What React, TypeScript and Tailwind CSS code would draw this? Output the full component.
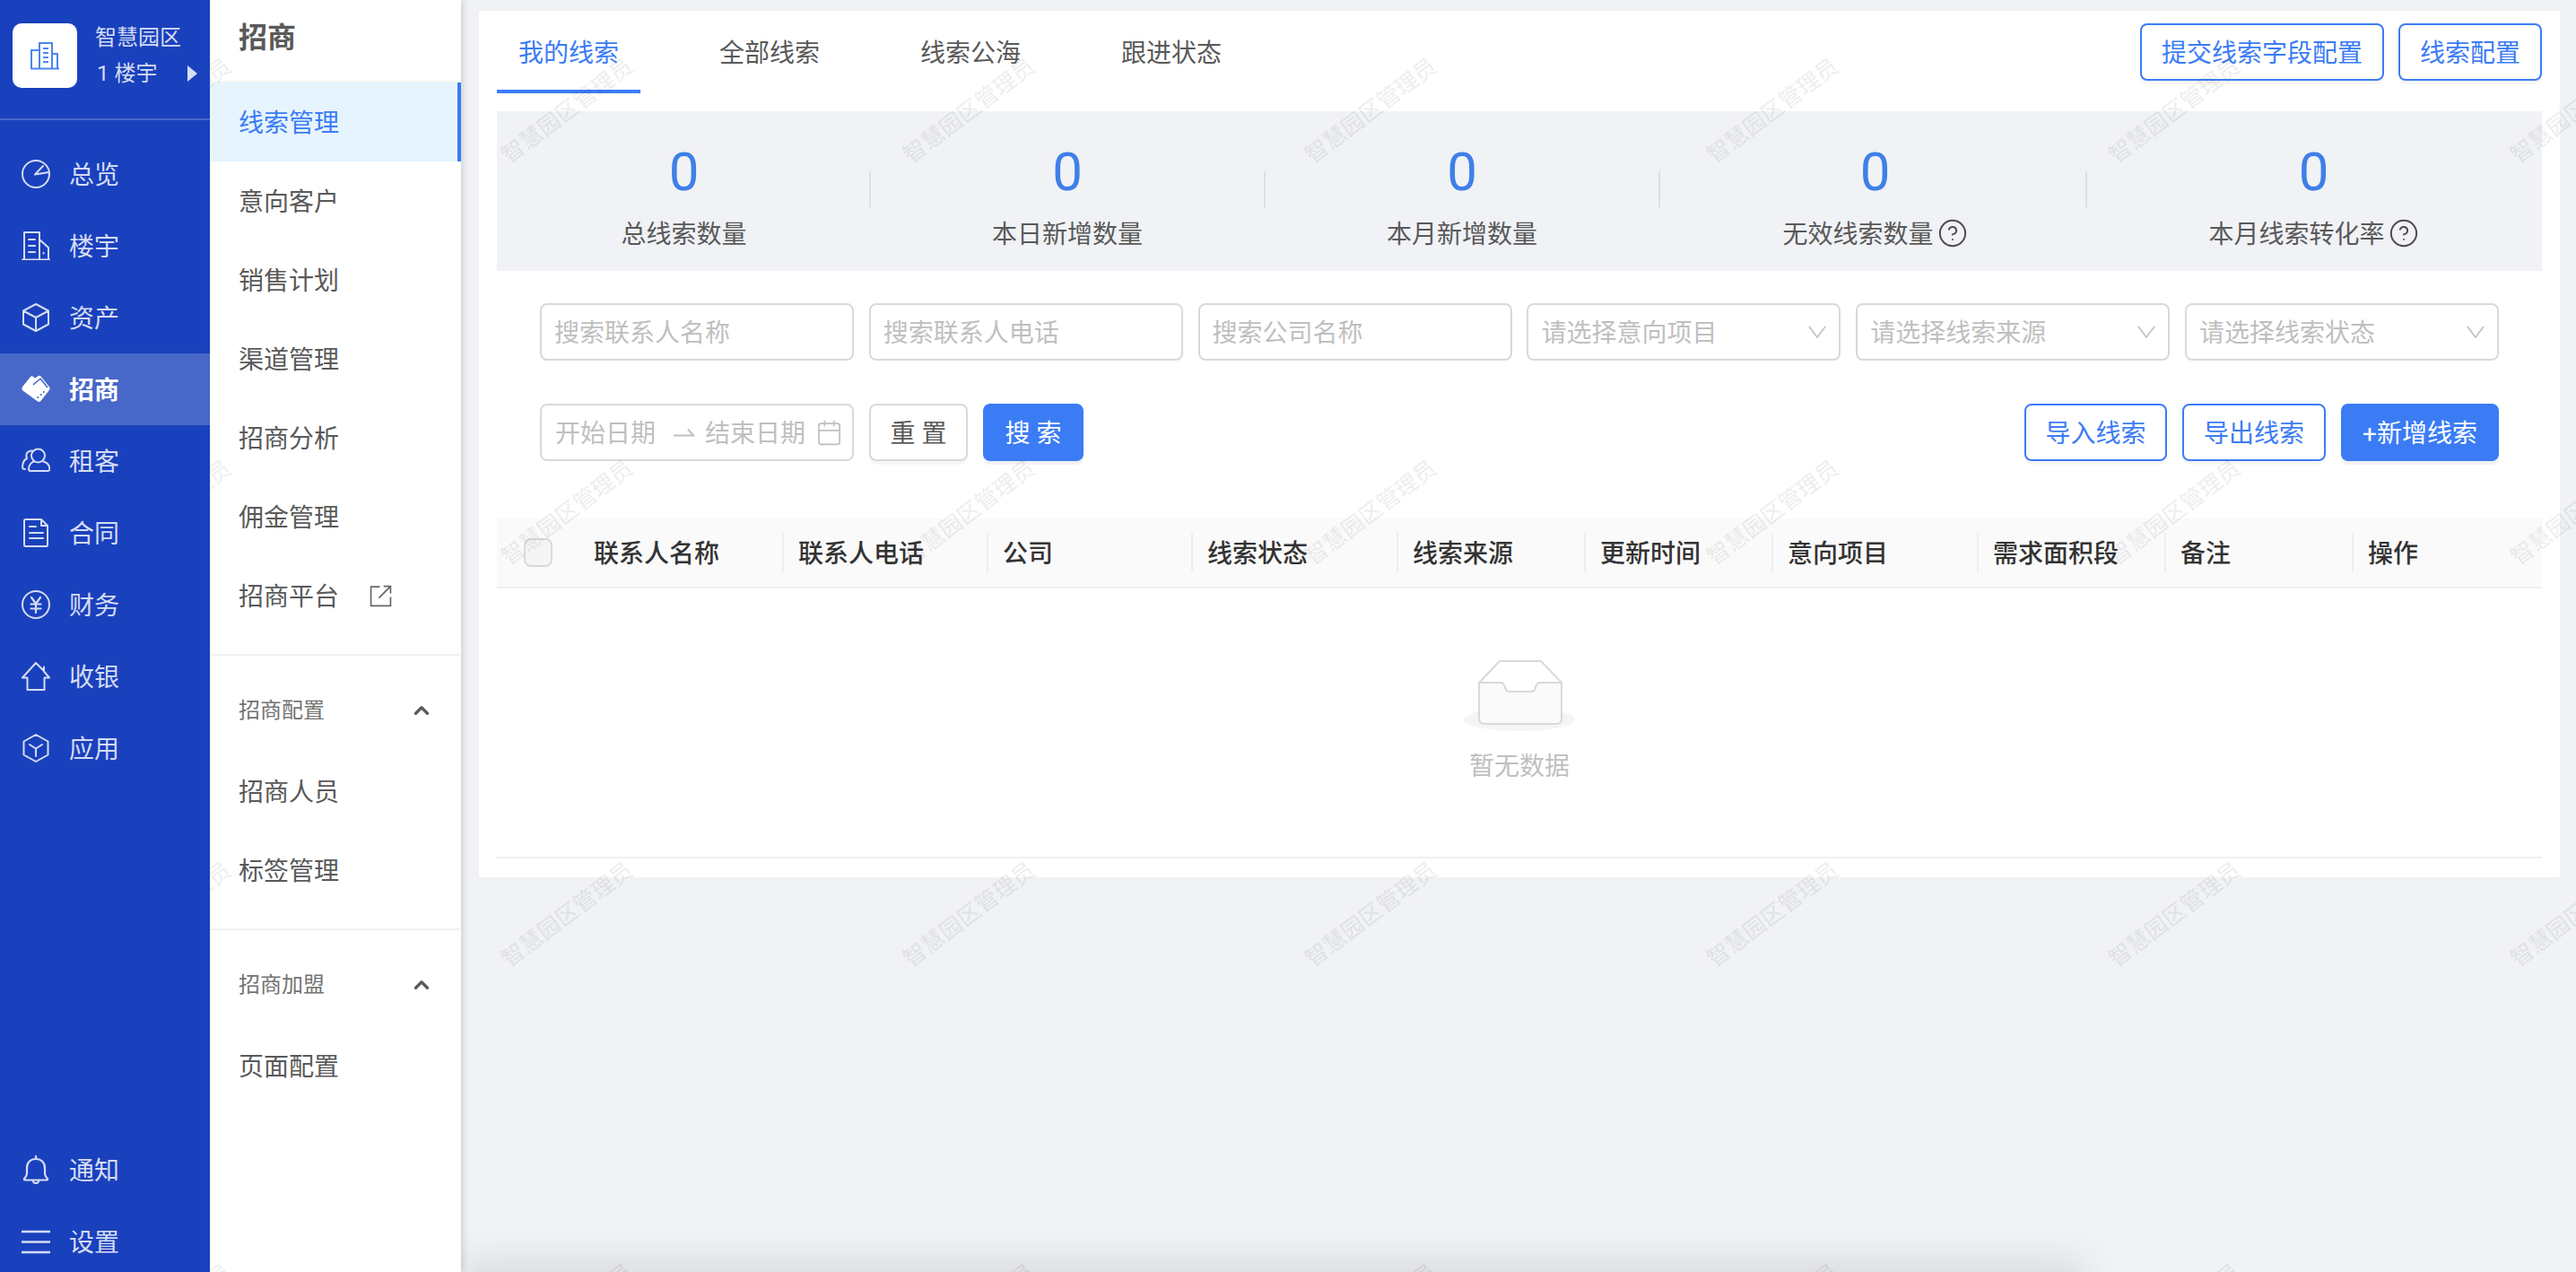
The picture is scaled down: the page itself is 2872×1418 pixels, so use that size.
import React from "react";
import { Calendar, ChevronUp, CircleHelp } from "lucide-react";

// ── Sidebar icons (all drawn on a 32x32 box) ─────────────────────

function Glyph({ children }: { children: React.ReactNode }) {
  return (
    <svg
      width="32"
      height="32"
      viewBox="0 0 32 32"
      fill="none"
      stroke="currentColor"
      strokeWidth="2"
      strokeLinejoin="round"
      strokeLinecap="round"
      className="shrink-0"
    >
      {children}
    </svg>
  );
}

const navIcons: Record<string, React.ReactNode> = {
  总览: (
    <Glyph>
      <circle cx="16" cy="16" r="15" />
      <path d="M15 16.5 24 7M15 16.5 30.5 14" />
    </Glyph>
  ),
  楼宇: (
    <Glyph>
      <path d="M1 31.5h30M3 31.5V1h17v30.5M20 9l10 9v13.5M8 9h7M8 16h7M8 23h7M24.5 24v.5" />
    </Glyph>
  ),
  资产: (
    <Glyph>
      <path d="M16 1 30 8.5v15L16 31 2 23.5v-15ZM2 8.5 16 16l14-7.5M16 16v15" />
    </Glyph>
  ),
  招商: (
    <svg width="32" height="32" viewBox="0 0 32 32" className="shrink-0">
      <path
        d="M.8 13.500 10 2Q11 1 12.500 1.500L15 3.500 19 1Q20.500.5 21.500 1.500L31.200 13.500Q32 15 31.200 16.500L21.500 29Q20 30.500 18 29.500L.8 17Q0 15.500.8 13.500Z"
        fill="#ffffff"
      />
      <path d="M13 11 21 4 29 14" fill="none" stroke="#4767c9" strokeWidth="1.600" strokeLinejoin="round" />
      <path d="M17.500 25h1.500M21 22h1.500M24 19h1.500" stroke="#4767c9" strokeWidth="2" />
    </svg>
  ),
  租客: (
    <Glyph>
      <circle cx="18.500" cy="10" r="7.500" />
      <path d="M14 16.500c-3 1-6 4-6 8 0 1.500.5 2.500 2 2.500h19.500c1.500 0 2-1 1.800-2.500-.3-4-3-7-7-8" />
      <path d="M12 4.500C7 4 4 8 6 13c-4 2-5 6-5 10 0 1.500 1 2 3 2" />
    </Glyph>
  ),
  合同: (
    <Glyph>
      <path d="M3 2.500c0-1 .5-1.500 1.500-1.500H22l7 7v21.500c0 1-.5 1.500-1.500 1.500h-23C3.500 31 3 30.500 3 29.500ZM22 1v7h7M9 9h7M9 16h15M9 22h15" />
    </Glyph>
  ),
  财务: (
    <Glyph>
      <circle cx="16" cy="16" r="15" />
      <path d="m11 8 5 7 5-7M10.500 15.500h11M10.500 20.500h11M16 15v10" strokeWidth="2.200" />
    </Glyph>
  ),
  收银: (
    <Glyph>
      <path d="M16 1 1 17.500h5.500V31h19V17.500H31l-6-7V5.500l-.5 4Z" />
    </Glyph>
  ),
  应用: (
    <Glyph>
      <path d="M16 1 29.500 8.500v15L16 31 2.500 23.500v-15ZM9 12l7 4.500 7-4.500M16 16.500V25" />
    </Glyph>
  ),
  通知: (
    <Glyph>
      <path
        d="M16 1v3M3 26c1-1.500 3-2.500 3-6v-6C6 8 10 4 16 4s10 4 10 10v6c0 3.500 2 4.500 3 6 .3.800 0 1.500-1 1.500H4c-1 0-1.300-.7-1-1.500ZM12.500 28c.5 2 2 3 3.500 3s3-1 3.500-3"
        strokeWidth="2.200"
      />
    </Glyph>
  ),
  设置: (
    <Glyph>
      <path d="M0 5h32M0 16.500h32M0 28h32" strokeLinecap="butt" strokeWidth="2.400" />
    </Glyph>
  ),
};

function NavRow({ label, active }: { label: string; active?: boolean }) {
  return (
    <div
      className={
        active
          ? "flex h-[80px] items-center gap-[21px] bg-[#4767c9] pl-[24px] text-[28px] font-bold text-white"
          : "flex h-[80px] items-center gap-[21px] pl-[24px] text-[28px] text-[#d5dcf3]"
      }
    >
      {navIcons[label]}
      <span className="pt-[4px]">{label}</span>
    </div>
  );
}

function Sidebar() {
  const top = ["总览", "楼宇", "资产", "招商", "租客", "合同", "财务", "收银", "应用"];
  return (
    <aside className="relative z-40 flex h-[1424px] w-[234px] shrink-0 flex-col bg-[#1a41bd]">
      <div className="flex h-[134px] border-b-2 border-[#4767c9] pl-[14px] pt-[26px]">
        <div className="flex h-[72px] w-[72px] items-center justify-center rounded-[10px] bg-white">
          <svg width="34" height="32" viewBox="0 0 34 32" fill="none" stroke="#4a86f0" strokeWidth="2">
            <path d="M1 30.500h32M2 30.500V10h9M11 30.500V2h14v28.500M25 14h6v16.500M15 8h6M15 13h6M15 18h6M15 23h6" />
          </svg>
        </div>
        <div className="ml-[20px] flex w-[114px] flex-col pt-[2px] text-[24px] text-[#d5dcf3]">
          <span className="leading-[28px]">智慧园区</span>
          <div className="mt-[12px] flex items-center justify-between leading-[28px]">
            <span className="ml-[2px]">1 楼宇</span>
            <svg width="11" height="18" viewBox="0 0 11 18" fill="#d8def5">
              <path d="M0 0 11 9 0 18Z" />
            </svg>
          </div>
        </div>
      </div>
      <nav className="mt-[20px] flex flex-col">
        {top.map((label) => (
          <NavRow key={label} label={label} active={label === "招商"} />
        ))}
      </nav>
      <div className="mt-auto flex flex-col">
        <NavRow label="通知" />
        <NavRow label="设置" />
      </div>
    </aside>
  );
}

// ── Secondary menu ───────────────────────────────────────────────

function MenuItem({ label, active, children }: { label: string; active?: boolean; children?: React.ReactNode }) {
  return (
    <div
      className={
        active
          ? "flex h-[88px] items-center border-r-4 border-[#3b7cf5] bg-[#e6f4fd] pl-[32px] text-[28px] text-[#3b7cf5]"
          : "flex h-[88px] items-center pl-[32px] text-[28px] text-[#595959]"
      }
    >
      <span className="pt-[4px]">{label}</span>
      {children}
    </div>
  );
}

function MenuGroup({ label }: { label: string }) {
  return (
    <div className="border-t-2 border-[#f0f0f0]">
      <div className="flex h-[107px] items-center justify-between pl-[32px] pr-[31px] pt-[15px] text-[24px] text-[#737373]">
        {label}
        <ChevronUp size={26} strokeWidth={3} className="text-[#595959]" />
      </div>
    </div>
  );
}

function SubMenu() {
  return (
    <aside className="relative z-10 flex h-full w-[280px] shrink-0 flex-col bg-white shadow-[3px_0_6px_rgba(0,0,0,0.12)]">
      <div className="flex h-[92px] items-center border-b-2 border-[#f5f5f5] pb-[6px] pl-[32px] text-[32px] font-bold text-[#595959]">
        招商
      </div>
      <MenuItem label="线索管理" active />
      <MenuItem label="意向客户" />
      <MenuItem label="销售计划" />
      <MenuItem label="渠道管理" />
      <MenuItem label="招商分析" />
      <MenuItem label="佣金管理" />
      <MenuItem label="招商平台">
        <svg width="25" height="25" viewBox="0 0 24 24" fill="none" stroke="#666666" strokeWidth="1.600" className="ml-[34px]">
          <path d="M11 2H1.500v20.500h21V13M10 14 22 2M15 1.500h7.500V9" />
        </svg>
      </MenuItem>
      <div className="h-[21px]" />
      <MenuGroup label="招商配置" />
      <MenuItem label="招商人员" />
      <MenuItem label="标签管理" />
      <div className="h-[21px]" />
      <MenuGroup label="招商加盟" />
      <MenuItem label="页面配置" />
    </aside>
  );
}

// ── Content ──────────────────────────────────────────────────────

function OutlineButton({ label, className }: { label: string; className: string }) {
  return (
    <button
      type="button"
      className={`flex h-[64px] items-center justify-center rounded-[8px] border-2 border-[#3b7cf5] bg-white pt-[4px] text-[28px] text-[#3b7cf5] shadow-[0_4px_0_rgba(0,0,0,0.03)] ${className}`}
    >
      {label}
    </button>
  );
}

function Stat({ label, help, className }: { label: string; help?: boolean; className: string }) {
  return (
    <div className={`flex flex-col items-center pt-[38px] ${className}`}>
      <span className="text-[60px] font-[Roboto,sans-serif] leading-[60px] text-[#3f7fe8]">0</span>
      <div className="mt-[18px] flex h-[40px] items-center gap-[4px] text-[28px] text-[#595959]">
        <span className="pt-[4px]">{label}</span>
        {help && <CircleHelp size={34} strokeWidth={1.4} className="text-[#4d4d4d]" />}
      </div>
    </div>
  );
}

function StatDivider() {
  return <div className="mt-[67px] h-[40px] w-[2px] bg-[#dcdfe3]" />;
}

function Field({ label, select }: { label: string; select?: boolean }) {
  return (
    <div className="flex h-[64px] items-center justify-between rounded-[8px] border-2 border-[#d9d9d9] bg-white pl-[14px] pr-[14px] text-[28px] text-[#bfbfbf]">
      <span className="pt-[4px]">{label}</span>
      {select && (
        <svg width="20" height="14" viewBox="0 0 20 14" fill="none" stroke="#bfbfbf" strokeWidth="1.600">
          <path d="M1 1 10 13 19 1" />
        </svg>
      )}
    </div>
  );
}

const columns = [
  { label: "联系人名称", width: "w-[228px]" },
  { label: "联系人电话", width: "w-[228px]" },
  { label: "公司", width: "w-[228px]" },
  { label: "线索状态", width: "w-[229px]" },
  { label: "线索来源", width: "w-[209px]" },
  { label: "更新时间", width: "w-[209px]" },
  { label: "意向项目", width: "w-[229px]" },
  { label: "需求面积段", width: "w-[209px]" },
  { label: "备注", width: "w-[209px]" },
  { label: "操作", width: "w-[212px]" },
];

function TableHead() {
  return (
    <div className="flex h-[78px] items-center border-b-2 border-[#f0f0f0] bg-[#fafafa] text-[28px] font-medium text-[#333333]">
      <div className="flex w-[90px] shrink-0 pl-[30px]">
        <div className="h-[32px] w-[32px] rounded-[8px] border-2 border-[#d9d9d9] bg-[#f5f5f5]" />
      </div>
      {columns.map((col, i) => (
        <div
          key={col.label}
          className={
            i === 0
              ? `flex h-[44px] shrink-0 items-center pl-[18px] ${col.width}`
              : `flex h-[44px] shrink-0 items-center border-l-2 border-[#eeeeee] pl-[16px] ${col.width}`
          }
        >
          <span className="pt-[4px]">{col.label}</span>
        </div>
      ))}
    </div>
  );
}

function EmptyState() {
  return (
    <div className="flex h-[301px] flex-col items-center border-b-2 border-[#f0f0f0] pt-[80px]">
      <svg width="124" height="80" viewBox="0 0 124 80" fill="none">
        <ellipse cx="62" cy="66" rx="62" ry="13" fill="#f5f5f5" />
        <path d="M17 25 40 1h46l23 24v40c0 4-2 6-6 6H23c-4 0-6-2-6-6Z" fill="#ffffff" />
        <path
          d="M17 25h24c3 0 4 2 5 5 .5 3 2 5 5 5h24c3 0 4.500-2 5-5 .8-3 2-5 5-5h24v40c0 4-2 6-6 6H23c-4 0-6-2-6-6Z"
          fill="#fafafa"
        />
        <path
          d="M17 25 40 1h46l23 24M17 25h24c3 0 4 2 5 5 .5 3 2 5 5 5h24c3 0 4.500-2 5-5 .8-3 2-5 5-5h24v40c0 4-2 6-6 6H23c-4 0-6-2-6-6Z"
          stroke="#d9d9d9"
          strokeWidth="2"
        />
      </svg>
      <span className="mt-[19px] text-[28px] leading-[40px] text-[#bfbfbf]">暂无数据</span>
    </div>
  );
}

function Watermarks() {
  const cells = Array.from({ length: 28 }, (_, i) => i);
  return (
    <div className="pointer-events-none absolute left-[-39px] top-[-100px] z-30 grid w-[3136px] grid-cols-[repeat(7,448px)] auto-rows-[448px]">
      {cells.map((i) => (
        <div key={i} className="flex items-center justify-center">
          <span className="rotate-[-37deg] whitespace-nowrap text-[25px] font-medium text-black/[0.08]">智慧园区管理员</span>
        </div>
      ))}
    </div>
  );
}

export default function App() {
  return (
    <div className="relative flex h-[1418px] w-[2872px] overflow-hidden bg-[#f0f2f5] font-[Roboto,'Noto_Sans_CJK_SC',sans-serif]">
      <Sidebar />
      <SubMenu />
      <main className="pl-[20px] pt-[12px]">
        <div className="h-[966px] w-[2320px] bg-white px-[20px]">
          {/* Tabs */}
          <div className="flex h-[92px] justify-between">
            <div className="flex gap-[64px] text-[28px] text-[#595959]">
              <div className="flex h-[92px] items-center border-b-4 border-[#3b7cf5] px-[24px] pt-[8px] text-[#3b7cf5]">我的线索</div>
              <div className="flex h-[92px] items-center px-[24px] pt-[4px]">全部线索</div>
              <div className="flex h-[92px] items-center px-[24px] pt-[4px]">线索公海</div>
              <div className="flex h-[92px] items-center px-[24px] pt-[4px]">跟进状态</div>
            </div>
            <div className="flex gap-[16px] pt-[14px]">
              <OutlineButton label="提交线索字段配置" className="w-[272px]" />
              <OutlineButton label="线索配置" className="w-[160px]" />
            </div>
          </div>

          {/* Stats */}
          <div className="mt-[20px] flex h-[178px] bg-[#f0f2f5]">
            <Stat label="总线索数量" className="w-[415px] pl-[2px]" />
            <StatDivider />
            <Stat label="本日新增数量" className="w-[438px]" />
            <StatDivider />
            <Stat label="本月新增数量" className="w-[438px]" />
            <StatDivider />
            <Stat label="无效线索数量" help className="w-[474px] pl-[5px]" />
            <StatDivider />
            <Stat label="本月线索转化率" help className="flex-1 pr-[2px]" />
          </div>

          {/* Filters */}
          <div className="mx-[48px] mt-[36px]">
            <div className="grid grid-cols-6 gap-x-[16.8px]">
              <Field label="搜索联系人名称" />
              <Field label="搜索联系人电话" />
              <Field label="搜索公司名称" />
              <Field label="请选择意向项目" select />
              <Field label="请选择线索来源" select />
              <Field label="请选择线索状态" select />
            </div>
            <div className="mt-[48px] flex justify-between">
              <div className="flex gap-[17px]">
                <div className="flex h-[64px] w-[350px] items-center rounded-[8px] border-2 border-[#d9d9d9] pl-[15px] text-[28px] text-[#bfbfbf]">
                  <span className="pt-[4px]">开始日期</span>
                  <svg width="24" height="10" viewBox="0 0 24 10" fill="none" stroke="#bfbfbf" strokeWidth="2" className="ml-[20px] mr-[11px]">
                    <path d="M0 8.500h22L16 1.500" />
                  </svg>
                  <span className="pt-[4px]">结束日期</span>
                  <Calendar size={31} strokeWidth={1.3} className="ml-[11px]" />
                </div>
                <button type="button" className="flex h-[64px] w-[110px] items-center justify-center rounded-[8px] border-2 border-[#d9d9d9] bg-white pt-[4px] text-[28px] text-[#595959] shadow-[0_4px_0_rgba(0,0,0,0.03)]">
                  重 置
                </button>
                <button type="button" className="flex h-[64px] w-[112px] items-center justify-center rounded-[8px] bg-[#3b7cf5] pt-[4px] text-[28px] text-white shadow-[0_4px_0_rgba(0,0,0,0.05)]">
                  搜 索
                </button>
              </div>
              <div className="flex gap-[17px]">
                <OutlineButton label="导入线索" className="w-[159px]" />
                <OutlineButton label="导出线索" className="w-[160px]" />
                <button type="button" className="flex h-[64px] w-[176px] items-center justify-center rounded-[8px] bg-[#3b7cf5] pt-[4px] text-[28px] text-white shadow-[0_4px_0_rgba(0,0,0,0.05)]">
                  +新增线索
                </button>
              </div>
            </div>
          </div>

          {/* Table */}
          <div className="mt-[64px]">
            <TableHead />
            <EmptyState />
          </div>
        </div>
      </main>

      <Watermarks />
      <div className="absolute left-[530px] top-[1418px] h-[40px] w-[1780px] shadow-[0_0_40px_15px_rgba(0,0,0,0.09)]" />
    </div>
  );
}
